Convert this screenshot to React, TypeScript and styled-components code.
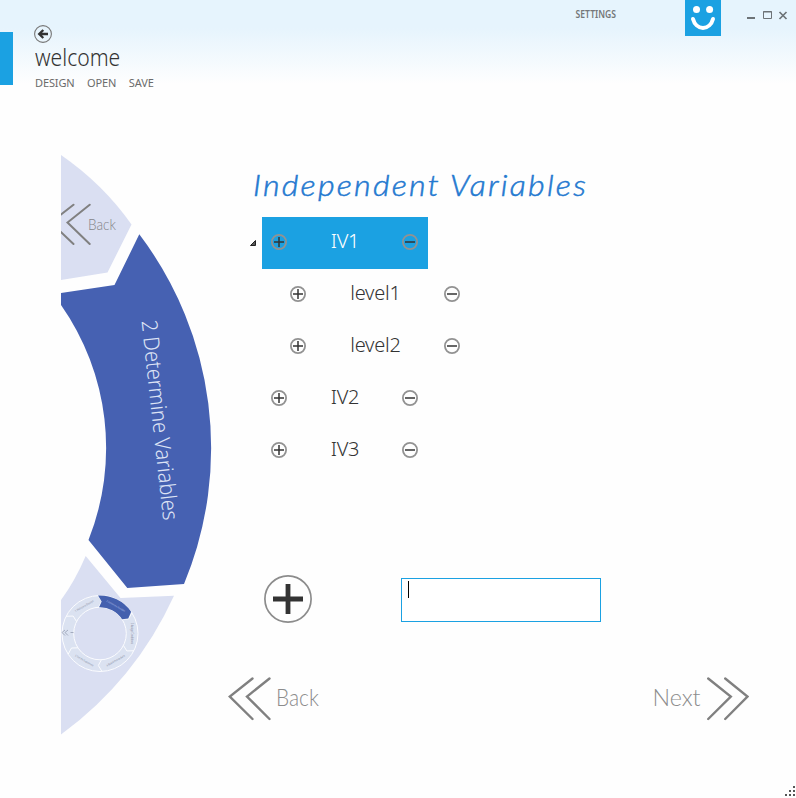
import React from 'react';
import styled, { createGlobalStyle } from 'styled-components';

const ACCENT = '#1ba1e2';

const GlobalStyle = createGlobalStyle`
  * { box-sizing: border-box; }
  body { margin: 0; background: #fefefe; font-family: "Noto Sans", sans-serif; overflow: hidden; }
  svg { display: block; flex: none; }
  button { border: 0; padding: 0; margin: 0; background: none; font: inherit; color: inherit; }
`;

const Window = styled.div`
  width: 796px;
  height: 798px;
  display: flex;
  flex-direction: column;
  background: linear-gradient(#e6f4fd 0, #e6f4fd 28px, #fefefe 84px);
`;

const Header = styled.header`
  height: 155px;
  display: flex;
  align-items: flex-start;
`;

const AccentBar = styled.div`
  width: 13px;
  height: 53px;
  margin-top: 32px;
  background: ${ACCENT};
`;

const TitleBlock = styled.div`
  width: 240px;
  margin: 25px 0 0 21px;
`;

const PageTitle = styled.h1`
  width: max-content;
  margin: 0 0 0 1px;
  font-weight: 300;
  font-size: 23.5px;
  line-height: 28px;
  color: #333;
  transform: scaleX(0.9);
  transform-origin: left;
`;

const Menu = styled.nav`
  display: flex;
  gap: 12.5px;
  margin: 4px 0 0 1px;
  font-size: 11px;
  line-height: 16px;
  letter-spacing: -0.12px;
  color: #6b6b6b;
`;

const Tools = styled.div`
  flex: 1;
  display: flex;
  justify-content: flex-end;
  align-items: flex-start;
  padding-right: 8px;
`;

const Settings = styled.button`
  margin: 7px 69px 0 0;
  font-size: 10px;
  font-weight: 600;
  line-height: 14px;
  color: #747779;
  transform: scaleX(0.86);
  transform-origin: right;
`;

const WindowControls = styled.div`
  display: flex;
  margin: 10px 0 0 26px;
`;

const Body = styled.main`
  flex: 1;
  display: flex;
  align-items: flex-start;
  padding-left: 61px;
`;

const Content = styled.section`
  width: 521px;
  margin-left: 16px;
  display: flex;
  flex-direction: column;
`;

const Heading = styled.h2`
  width: max-content;
  height: 52px;
  margin: 10px 0 0 25px;
  font-family: Lato, sans-serif;
  font-style: italic;
  font-weight: 300;
  font-size: 29px;
  line-height: 40px;
  letter-spacing: 2px;
  color: #2479d0;
  -webkit-text-stroke: 0.5px #2479d0;
  transform: scaleX(1.11);
  transform-origin: left;
`;

const Tree = styled.div`
  display: flex;
  flex-direction: column;
  height: 260px;
`;

const TreeLine = styled.div`
  display: flex;
  align-items: center;
  height: 52px;
`;

const Expander = styled.div`
  width: 34px;
  padding: 0 0 0 22px;
`;

const Item = styled.div<{ $selected?: boolean; $child?: boolean }>`
  display: flex;
  align-items: center;
  justify-content: space-between;
  width: ${p => (p.$child ? 189 : 166)}px;
  height: 52px;
  margin-left: ${p => (p.$child ? 19 : 0)}px;
  padding: 0 10px 2px 9px;
  background: ${p => (p.$selected ? ACCENT : 'transparent')};
  color: ${p => (p.$selected ? '#fff' : '#333')};
`;

const ItemLabel = styled.span`
  padding: 0 0 2px 1px;
  font-size: 20px;
  font-weight: 300;
  line-height: 28px;
  letter-spacing: -0.2px;
`;

const EntryRow = styled.div`
  display: flex;
  align-items: flex-start;
  margin: 98px 0 0 36px;
  height: 48px;
`;

const Entry = styled.div`
  width: 200px;
  height: 44px;
  margin: 3px 0 0 89px;
  padding: 2px 0 0 6px;
  border: 1px solid ${ACCENT};
  background: #fff;
`;

const Caret = styled.div`
  width: 1px;
  height: 17px;
  background: #000;
`;

const Pager = styled.div`
  display: flex;
  justify-content: space-between;
  margin-top: 54px;
`;

const PagerButton = styled.button`
  display: flex;
  align-items: center;
  gap: 5px;
  color: #8c8c8c;
`;

const PagerLabel = styled.span<{ $scale: number; $origin: string }>`
  padding-bottom: 5px;
  font-family: Lato, sans-serif;
  font-weight: 300;
  font-size: 24px;
  line-height: 32px;
  transform: scaleX(${p => p.$scale});
  transform-origin: ${p => p.$origin};
`;

const Footer = styled.footer`
  display: flex;
  justify-content: flex-end;
  padding: 0 1px 2px 0;
`;

function BackCircle() {
  return (
    <svg width="18" height="18" viewBox="0 0 18 18" fill="none">
      <circle cx="9" cy="9" r="8.4" stroke="#777" strokeWidth="1.1" />
      <path d="M14 9H5.5M9.3 5L5.2 9l4.1 4" stroke="#333" strokeWidth="2.3" />
    </svg>
  );
}

function Smiley() {
  return (
    <svg width="36" height="36" viewBox="0 0 36 36" fill="none">
      <rect width="36" height="36" fill={ACCENT} />
      <circle cx="11.5" cy="9.5" r="3.5" fill="#fff" />
      <circle cx="24.6" cy="9.5" r="3.5" fill="#fff" />
      <path d="M8 19c1.3 5 5.2 8.9 10 8.9s8.7-3.9 10-8.9" stroke="#fff" strokeWidth="4" strokeLinecap="round" />
    </svg>
  );
}

function Controls() {
  return (
    <svg width="41" height="11" viewBox="0 0 41 11" fill="none" stroke="#6d7377">
      <path d="M0 8h8" strokeWidth="2" />
      <path d="M16.5 1.5h8v7h-8z M16 2h9" />
      <path d="M32.5 2l7 7M39.5 2l-7 7" strokeWidth="1.7" />
    </svg>
  );
}

function RoundIcon({ minus }: { minus?: boolean }) {
  return (
    <svg width="16" height="16" viewBox="0 0 16 16" fill="none">
      <circle cx="8" cy="8" r="7.1" stroke="#929292" strokeWidth="1.8" />
      <path d={minus ? 'M3 8h10' : 'M3 8h10M8 3v10'} stroke="#333" strokeWidth="1.5" />
    </svg>
  );
}

function AddCircle() {
  return (
    <svg width="48" height="48" viewBox="0 0 48 48" fill="none">
      <circle cx="24" cy="24" r="23.1" stroke="#8c8c8c" strokeWidth="1.7" />
      <path d="M9 24h30M24 9v30" stroke="#333" strokeWidth="4.8" />
    </svg>
  );
}

function Chevrons({ right }: { right?: boolean }) {
  return (
    <svg width="43" height="44" viewBox="0 0 43 44" fill="none" stroke="#808080" strokeWidth="2.4" strokeLinecap="round">
      {right ? (
        <path d="M2.200 1.500L24.800 19.500L2.200 42M19.200 1.500L41.500 19.500L19.200 42" />
      ) : (
        <path d="M24.500 1.500L1.800 19.500L24.500 42M41.500 1.500L19 19.500L41.500 42" />
      )}
    </svg>
  );
}

// Position on the small wheel for an angle in degrees, clockwise from the top.
const polar = (r: number, a: number) => {
  const t = ((a - 90) * Math.PI) / 180;
  return `${(100 + r * Math.cos(t)).toFixed(2)} ${(633.5 + r * Math.sin(t)).toFixed(2)}`;
};

const miniLabels = ['2 Determine Variables', '3 Assign Conditions', '4 Build Procedure', '5 Test the Experiment', '', '1 Welcome Design'];

function MiniWheel() {
  return (
    <g>
      <circle cx="100" cy="633.5" r="32" fill="none" stroke="#dbe2f1" strokeWidth="12" />
      <g fill="none" stroke="#fbfcff" strokeWidth="1">
        <circle cx="100" cy="633.5" r="38" />
        <circle cx="100" cy="633.5" r="26.3" />
        {[0, 60, 120, 180, 240, 300].map(a => (
          <path key={a} d={`M${polar(38, a - 3)}L${polar(32, a + 3)}L${polar(26.3, a - 3)}`} />
        ))}
      </g>
      <path
        d={`M${polar(38, -3)}A38 38 0 0 1 ${polar(38, 55)}L${polar(32, 62)}L${polar(26.3, 57)}A26.3 26.3 0 0 0 ${polar(26.3, -2)}L${polar(32, 3)}Z`}
        fill="#4460ae"
      />
      {miniLabels.map((t, i) => {
        const a = 30 + i * 60;
        const flip = a > 100 && a < 260;
        return (
          <text
            key={i}
            transform={`translate(${polar(31.5, a)}) rotate(${flip ? a + 180 : a})`}
            textAnchor="middle"
            dominantBaseline="middle"
            fontSize="2.7"
            fill={i === 0 ? '#aab9e3' : '#858ca2'}
            textLength={t ? 21 : undefined}
            lengthAdjust="spacingAndGlyphs"
          >
            {t}
          </text>
        );
      })}
      <path d="M65 630l-3 2.500 3 3M68 630l-3 2.500 3 3M70.500 632.500h3" fill="none" stroke="#8b93a8" strokeWidth=".7" />
    </g>
  );
}

function ProcessWheel() {
  return (
    <svg width="151" height="581" viewBox="61 155 151 581">
      <path d="M61 155Q103 184 131.500 224.500L107.500 272.500L61 280Z" fill="#dadff2" />
      <path d="M139.300 234.300A354 354 0 0 1 184 584L127.300 588L88.500 540A249 249 0 0 0 61 305V293L114.500 285Z" fill="#4661b2" />
      <path d="M85.700 556L120.500 598L174 595.700A354 354 0 0 1 61 734.500V600Q75 581 85.700 556Z" fill="#dadff2" />
      <path d="M73.500 204.700L51 222.500L73.500 244M89.700 204.700L67.500 222.500L89.700 244" fill="none" stroke="#808080" strokeWidth="2" strokeLinecap="round" />
      <text x="88" y="230" fontFamily="Lato, sans-serif" fontWeight="300" fontSize="15" fill="#848488" textLength="28" lengthAdjust="spacingAndGlyphs">
        Back
      </text>
      <text transform="translate(141.500 321) rotate(83.800)" fontWeight="300" fontSize="21.800" fill="#dde3f5" textLength="201" lengthAdjust="spacingAndGlyphs">
        2 Determine Variables
      </text>
      <MiniWheel />
    </svg>
  );
}

interface Row {
  label: string;
  child?: boolean;
  selected?: boolean;
}

const rows: Row[] = [
  { label: 'IV1', selected: true },
  { label: 'level1', child: true },
  { label: 'level2', child: true },
  { label: 'IV2' },
  { label: 'IV3' },
];

export default function App() {
  return (
    <Window>
      <GlobalStyle />
      <Header>
        <AccentBar />
        <TitleBlock>
          <BackCircle />
          <PageTitle>welcome</PageTitle>
          <Menu>
            <span>DESIGN</span>
            <span>OPEN</span>
            <span>SAVE</span>
          </Menu>
        </TitleBlock>
        <Tools>
          <Settings>SETTINGS</Settings>
          <Smiley />
          <WindowControls>
            <Controls />
          </WindowControls>
        </Tools>
      </Header>
      <Body>
        <ProcessWheel />
        <Content>
          <Heading>Independent Variables</Heading>
          <Tree>
            {rows.map(r => (
              <TreeLine key={r.label}>
                <Expander>
                  {r.selected && (
                    <svg width="6" height="6" viewBox="0 0 6 6">
                      <path d="M5.500 .5v5h-5z" fill="#595959" stroke="#222" />
                    </svg>
                  )}
                </Expander>
                <Item $selected={r.selected} $child={r.child}>
                  <RoundIcon />
                  <ItemLabel>{r.label}</ItemLabel>
                  <RoundIcon minus />
                </Item>
              </TreeLine>
            ))}
          </Tree>
          <EntryRow>
            <AddCircle />
            <Entry>
              <Caret />
            </Entry>
          </EntryRow>
          <Pager>
            <PagerButton>
              <Chevrons />
              <PagerLabel $scale={0.87} $origin="left">Back</PagerLabel>
            </PagerButton>
            <PagerButton>
              <PagerLabel $scale={0.97} $origin="right">Next</PagerLabel>
              <Chevrons right />
            </PagerButton>
          </Pager>
        </Content>
      </Body>
      <Footer>
        <svg width="10" height="10" viewBox="0 0 10 10" fill="#555">
          <path d="M8 0h2v2H8zM8 4h2v2H8zM8 8h2v2H8zM4 4h2v2H4zM4 8h2v2H4zM0 8h2v2H0z" />
        </svg>
      </Footer>
    </Window>
  );
}
